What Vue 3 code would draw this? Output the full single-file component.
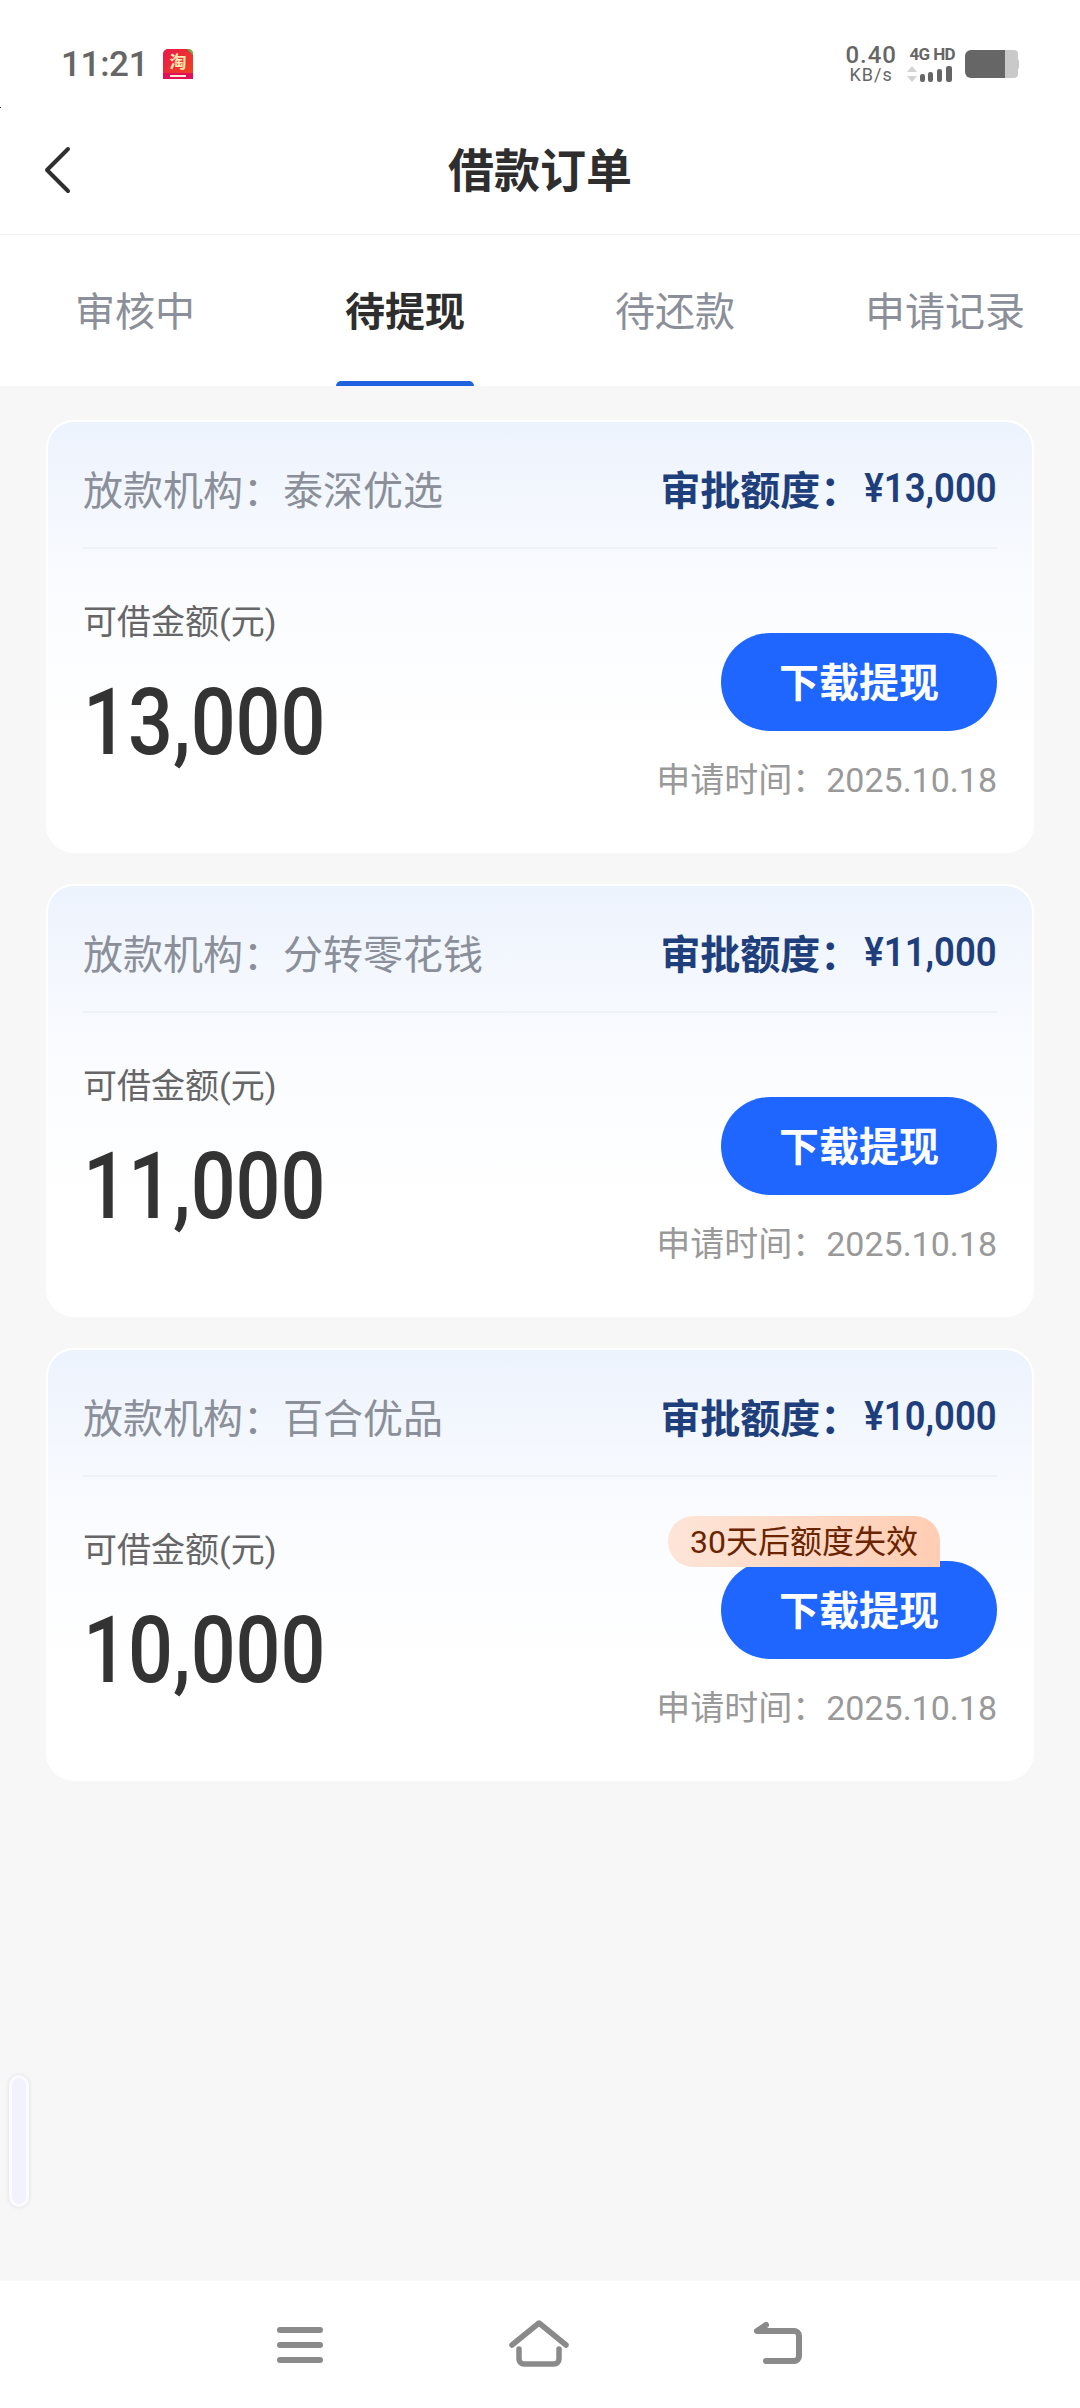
<script setup>
const tabs = [
  { name: '审核中', active: false },
  { name: '待提现', active: true },
  { name: '待还款', active: false },
  { name: '申请记录', active: false },
]
const cards = [
  { org: '泰深优选', amount: '13,000', tag: '' },
  { org: '分转零花钱', amount: '11,000', tag: '' },
  { org: '百合优品', amount: '10,000', tag: '30天后额度失效' },
]
</script>

<template>
  <div class="page">
    <div class="status">
      <span class="time">11:21</span>
      <svg class="tb" width="30" height="30" viewBox="0 0 30 30">
        <defs>
          <linearGradient id="tbg" x1="0" y1="0" x2="1" y2="1">
            <stop offset="0" stop-color="#e8184a" />
            <stop offset="1" stop-color="#f0481c" />
          </linearGradient>
        </defs>
        <rect width="30" height="30" rx="5" fill="url(#tbg)" />
        <rect y="24" width="30" height="6" fill="#e0105a" />
        <rect x="7" y="26" width="16" height="2" fill="#ffe9d0" />
        <text x="15" y="19" text-anchor="middle" font-size="17" font-weight="700" fill="#ffe9b0" font-family="Noto Sans CJK SC, sans-serif">淘</text>
        <path d="M24 0h3l3 3v3z" fill="#5dbb46" />
      </svg>
      <span class="spacer"></span>
      <div class="speed"><b>0.40</b><i>KB/s</i></div>
      <div class="net">
        <span class="hd">4G HD</span>
        <svg width="48" height="18" viewBox="0 0 48 18">
          <path d="M5 1l5 6H0zM5 17l5-6H0z" fill="#d2d2d2" />
          <rect x="13" y="9" width="5" height="8" rx="2.2" fill="#666" />
          <rect x="21" y="7" width="5" height="10" rx="2.2" fill="#666" />
          <rect x="30" y="4" width="5" height="13" rx="2.2" fill="#666" />
          <rect x="39" y="1" width="6" height="16" rx="2.2" fill="#666" />
        </svg>
      </div>
      <svg class="battery" width="54" height="28" viewBox="0 0 54 28">
        <path d="M6 0h43a4 4 0 0 1 4 4v20a4 4 0 0 1-4 4H6z" fill="#c9c9c9" />
        <path d="M6 0h34v28H6a6 6 0 0 1-6-6V6a6 6 0 0 1 6-6z" fill="#666" />
        <rect x="51" y="9" width="3" height="10" rx="1.5" fill="#c9c9c9" />
      </svg>
    </div>

    <header class="nav">
      <svg class="back" width="30" height="48" viewBox="0 0 30 48">
        <path d="M25 3L4 24l21 21" fill="none" stroke="#2f2f2f" stroke-width="4" stroke-linecap="round" stroke-linejoin="round" />
      </svg>
      <h1 class="title">借款订单</h1>
    </header>

    <nav class="tabs">
      <div v-for="t in tabs" :key="t.name" class="tab" :class="{ on: t.active }">{{ t.name }}</div>
    </nav>

    <main class="list">
      <section v-for="c in cards" :key="c.org" class="card">
        <div class="card-head">
          <span class="org">放款机构：{{ c.org }}</span>
          <span class="quota">审批额度：<em>¥{{ c.amount }}</em></span>
        </div>
        <div class="card-body">
          <div class="left">
            <div class="label">可借金额(元)</div>
            <div class="amount">{{ c.amount }}</div>
          </div>
          <div class="right">
            <div class="btn">
              下载提现
              <span v-if="c.tag" class="tag">{{ c.tag }}</span>
            </div>
            <div class="date">申请时间：2025.10.18</div>
          </div>
        </div>
      </section>
    </main>

    <footer class="sys">
      <svg width="48" height="40" viewBox="0 0 48 40">
        <path d="M4 5h40M4 20h40M4 35h40" stroke="#8a8a8a" stroke-width="6" stroke-linecap="round" fill="none" />
      </svg>
      <svg width="60" height="50" viewBox="0 0 60 50">
        <path d="M3 25L30 3l27 22" stroke="#8a8a8a" stroke-width="5.5" stroke-linecap="round" stroke-linejoin="round" fill="none" />
        <path d="M10 29v10a5 5 0 0 0 5 5h30a5 5 0 0 0 5-5V29" stroke="#8a8a8a" stroke-width="5.5" stroke-linecap="round" fill="none" />
      </svg>
      <svg width="50" height="48" viewBox="0 0 50 48">
        <path d="M12 4L3 10h37a5 5 0 0 1 5 5v20a5 5 0 0 1-5 5H12" stroke="#8a8a8a" stroke-width="6" stroke-linecap="round" stroke-linejoin="round" fill="none" />
      </svg>
    </footer>

    <div class="handle"></div>
    <div class="dot"></div>
  </div>
</template>

<style scoped>
.page {
  position: relative;
  width: 1080px;
  height: 2408px;
  display: flex;
  flex-direction: column;
  background: #f7f7f8;
  font-family: Roboto, "Noto Sans CJK SC", sans-serif;
  overflow: hidden;
}
.status {
  height: 110px;
  background: #fff;
  display: flex;
  align-items: center;
  padding: 18px 61px 0 61px;
  box-sizing: border-box;
}
.time { font-size: 35px; font-weight: 500; color: #666; letter-spacing: -0.3px; }
.tb { margin-left: 15px; }
.spacer { flex: 1; }
.speed {
  display: flex;
  flex-direction: column;
  align-items: center;
  color: #666;
  margin-right: 10px;
  line-height: 1;
}
.speed b { font-size: 24px; font-weight: 500; letter-spacing: 1px; line-height: 21px; }
.speed i { font-size: 18px; font-style: normal; letter-spacing: 1px; line-height: 17px; }
.net { display: flex; flex-direction: column; align-items: flex-end; width: 48px; }
.hd { font-size: 17px; font-weight: 700; color: #666; line-height: 18px; white-space: nowrap; margin-bottom: 2px; letter-spacing: -0.6px; }
.battery { margin-left: 10px; }
.nav {
  position: relative;
  height: 125px;
  background: #fff;
  border-bottom: 1px solid #f2f2f2;
  display: flex;
  align-items: center;
  justify-content: center;
  box-sizing: border-box;
  padding-bottom: 10px;
}
.back { position: absolute; left: 43px; top: 36px; }
.title { margin: 0; font-size: 46px; font-weight: 700; color: #2e2e2e; }
.tabs {
  height: 151px;
  background: #fff;
  display: grid;
  grid-template-columns: repeat(4, 270px);
}
.tab {
  position: relative;
  display: flex;
  align-items: center;
  justify-content: center;
  font-size: 40px;
  color: #8a8f99;
  padding-bottom: 3px;
  box-sizing: border-box;
}
.tab.on { color: #2e2e2e; font-weight: 700; }
.tab.on::after {
  content: "";
  position: absolute;
  left: 66px;
  right: 66px;
  bottom: 0;
  height: 5px;
  border-radius: 5px 5px 0 0;
  background: #1f63e0;
}
.list {
  flex: 1;
  padding: 34px 46px 0;
  display: flex;
  flex-direction: column;
  gap: 31px;
}
.card {
  height: 433px;
  box-sizing: border-box;
  border: 2px solid #fff;
  border-radius: 28px;
  background: linear-gradient(180deg, #edf3fd 0%, #fbfcff 42%, #fff 75%);
  padding: 0 35px 0 35px;
}
.card-head {
  height: 119px;
  padding-top: 6px;
  display: flex;
  align-items: center;
  justify-content: space-between;
  border-bottom: 2px solid #eff2f8;
  box-sizing: content-box;
}
.org { font-size: 40px; color: #8a8f99; }
.quota { font-size: 40px; font-weight: 700; color: #1f3f7c; display: flex; align-items: center; }
.quota em {
  display: inline-block;
  font-style: normal;
  font-size: 41px;
  font-weight: 600;
  transform: scaleX(0.89);
  transform-origin: right center;
  margin-left: -12px;
}
.card-body {
  display: flex;
  justify-content: space-between;
  align-items: flex-start;
}
.left { padding-top: 50px; }
.label { font-size: 34px; line-height: 46px; color: #666; }
.amount {
  margin-top: 28px;
  font-size: 92px;
  line-height: 100px;
  font-weight: 500;
  color: #333;
  transform: scaleX(0.86);
  transform-origin: left center;
}
.right {
  padding-top: 84px;
  display: flex;
  flex-direction: column;
  align-items: flex-end;
}
.btn {
  position: relative;
  width: 276px;
  height: 98px;
  border-radius: 49px;
  background: #1e66ff;
  color: #fff;
  font-size: 40px;
  font-weight: 700;
  display: flex;
  align-items: center;
  justify-content: center;
  box-sizing: border-box;
  padding-bottom: 5px;
}
.tag {
  position: absolute;
  top: -45px;
  right: 57px;
  height: 51px;
  padding: 0 22px 5px;
  box-sizing: border-box;
  display: flex;
  align-items: center;
  white-space: nowrap;
  border-radius: 25px 25px 0 25px;
  background: linear-gradient(90deg, #fde5d8, #ffcdb3);
  color: #6a2400;
  font-size: 32px;
  font-weight: 400;
}
.date {
  margin-top: 26px;
  font-size: 34px;
  line-height: 46px;
  color: #999;
}
.sys {
  height: 127px;
  background: #fff;
  display: flex;
  align-items: center;
  justify-content: center;
  gap: 185px;
}
.handle {
  position: absolute;
  left: 9px;
  top: 2075px;
  width: 20px;
  height: 132px;
  box-sizing: border-box;
  border-radius: 10px;
  background: #f1f2fc;
  border: 3px solid #fbfbfc;
  box-shadow: 0 0 4px #dcdce2;
}
.dot {
  position: absolute;
  left: 0;
  top: 107px;
  width: 1px;
  height: 1px;
  background: #222;
}
</style>
